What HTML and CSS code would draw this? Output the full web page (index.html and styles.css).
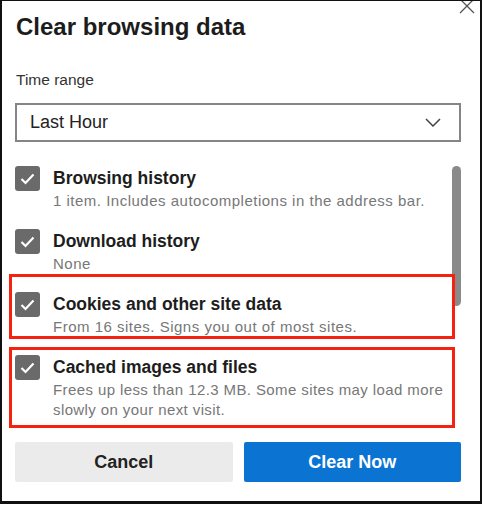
FILE: index.html
```html
<!DOCTYPE html>
<html lang="en">
<head>
<meta charset="utf-8">
<title>Clear browsing data</title>
<link rel="stylesheet" href="styles.css">
</head>
<body>
<div class="frame">
  <button class="close" aria-label="Close">
    <svg width="16" height="16" viewBox="0 0 16 16"><path d="M1 1 L15 15 M15 1 L1 15" stroke="#555" stroke-width="1.3" fill="none"/></svg>
  </button>
  <h1 class="title">Clear browsing data</h1>
  <div class="field-label">Time range</div>
  <div class="select">
    <span class="select-value">Last Hour</span>
    <svg class="chevron" width="16" height="9" viewBox="0 0 16 9"><path d="M1 1 L8 8 L15 1" stroke="#444" stroke-width="1.5" fill="none"/></svg>
  </div>
  <div class="list">
    <div class="items">
      <div class="row">
        <span class="check"><svg width="25" height="25" viewBox="0 0 25 25"><path d="M6.5 13 L10.5 17 L18.5 8.5" stroke="#fff" stroke-width="2.2" fill="none"/></svg></span>
        <div class="text">
          <div class="label">Browsing history</div>
          <div class="desc">1 item. Includes autocompletions in the address bar.</div>
        </div>
      </div>
      <div class="row">
        <span class="check"><svg width="25" height="25" viewBox="0 0 25 25"><path d="M6.5 13 L10.5 17 L18.5 8.5" stroke="#fff" stroke-width="2.2" fill="none"/></svg></span>
        <div class="text">
          <div class="label">Download history</div>
          <div class="desc">None</div>
        </div>
      </div>
      <div class="row mark mark-cookies">
        <span class="check"><svg width="25" height="25" viewBox="0 0 25 25"><path d="M6.5 13 L10.5 17 L18.5 8.5" stroke="#fff" stroke-width="2.2" fill="none"/></svg></span>
        <div class="text">
          <div class="label">Cookies and other site data</div>
          <div class="desc">From 16 sites. Signs you out of most sites.</div>
        </div>
      </div>
      <div class="row mark mark-cache">
        <span class="check"><svg width="25" height="25" viewBox="0 0 25 25"><path d="M6.5 13 L10.5 17 L18.5 8.5" stroke="#fff" stroke-width="2.2" fill="none"/></svg></span>
        <div class="text">
          <div class="label">Cached images and files</div>
          <div class="desc desc-wide">Frees up less than 12.3 MB. Some sites may load more<br>slowly on your next visit.</div>
        </div>
      </div>
    </div>
    <div class="track"><div class="thumb"></div></div>
  </div>
  <div class="actions">
    <button class="btn btn-cancel">Cancel</button>
    <button class="btn btn-primary">Clear Now</button>
  </div>
</div>
</body>
</html>
```

FILE: styles.css
```css
html, body {
  margin: 0;
  padding: 0;
  background: #fff;
}

body {
  font-family: "Liberation Sans", Arial, sans-serif;
}

.frame {
  position: relative;
  box-sizing: border-box;
  width: 482px;
  height: 504px;
  border: 2px solid #111;
  border-top-width: 1px;
  border-bottom-width: 3px;
  padding: 11px 19px 0 13px;
  overflow: hidden;
  background: #fff;
}

.close {
  position: absolute;
  top: -3px;
  right: 5px;
  width: 16px;
  height: 16px;
  padding: 0;
  border: 0;
  background: transparent;
  display: block;
}

.close svg {
  display: block;
}

.title {
  margin: 0;
  font-size: 24px;
  line-height: 30px;
  font-weight: 700;
  color: #1c1c1c;
  padding-left: 1px;
}

.field-label {
  margin-top: 28px;
  font-size: 15.5px;
  line-height: 20px;
  color: #333;
  padding-left: 1px;
}

.select {
  margin-top: 13px;
  box-sizing: border-box;
  height: 39px;
  border: 2px solid #858585;
  display: flex;
  align-items: center;
  justify-content: space-between;
  padding: 0 18px 0 13px;
}

.select-value {
  font-size: 18px;
  line-height: 35px;
  color: #222;
}

.chevron {
  display: block;
}

.list {
  margin-top: 24px;
  display: flex;
  align-items: flex-start;
}

.items {
  flex: 1;
  display: flex;
  flex-direction: column;
  gap: 18px;
}

.track {
  width: 9px;
  margin-left: 5px;
}

.thumb {
  width: 9px;
  height: 140px;
  border-radius: 5px;
  background: #8a8a8a;
}

.row {
  position: relative;
  display: flex;
  align-items: flex-start;
  gap: 13px;
}

.check {
  flex: none;
  width: 25px;
  height: 25px;
  border-radius: 3px;
  background: #6a6a6a;
}

.check svg {
  display: block;
}

.text {
  flex: 1;
  min-width: 0;
}

.label {
  font-size: 17.5px;
  line-height: 25px;
  font-weight: 700;
  color: #1d1d1d;
}

.desc {
  font-size: 15px;
  line-height: 20px;
  letter-spacing: 0.5px;
  color: #777;
}

.desc-wide {
  white-space: nowrap;
  letter-spacing: 0.4px;
}

.mark::after {
  content: "";
  position: absolute;
  left: -6px;
  right: -8px;
  border: 3px solid #f5220f;
  z-index: 2;
  pointer-events: none;
}

.mark-cookies::after {
  top: -18px;
  bottom: -2px;
}

.mark-cache::after {
  top: -8px;
  bottom: -8px;
}

.actions {
  margin-top: 22px;
  display: flex;
  gap: 11px;
}

.btn {
  flex: 1;
  height: 40px;
  border: 0;
  border-radius: 2px;
  font-family: "Liberation Sans", Arial, sans-serif;
  font-size: 18px;
  font-weight: 700;
  padding: 0;
}

.btn-cancel {
  background: #ebebeb;
  color: #222;
}

.btn-primary {
  background: #0b74d3;
  color: #fff;
}
```
